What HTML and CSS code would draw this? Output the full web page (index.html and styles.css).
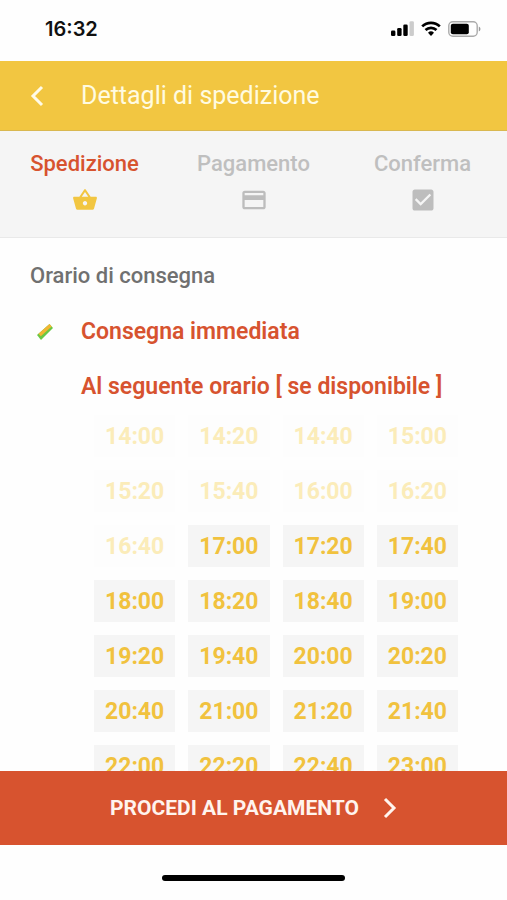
FILE: index.html
```html
<!DOCTYPE html>
<html lang="it">
<head>
<meta charset="utf-8">
<meta name="viewport" content="width=device-width, initial-scale=1">
<title>Dettagli di spedizione</title>
<link rel="stylesheet" href="styles.css">
</head>
<body>
<div class="status">
  <span class="clock">16:32</span>
  <div class="indicators">
    <svg width="23" height="15" viewBox="0 0 23 15" aria-hidden="true">
      <rect x="0" y="9.500" width="4.400" height="5.500" rx="1.300"/>
      <rect x="6.200" y="7" width="4.400" height="8" rx="1.300"/>
      <rect x="12.300" y="3.500" width="4.400" height="11.500" rx="1.300"/>
      <rect x="18.500" y="0.300" width="4.400" height="14.700" rx="1.300" fill="#ccc"/>
    </svg>
    <svg width="20" height="15" viewBox="0 0 20 15" fill="none" stroke="#000" stroke-width="2.700" aria-hidden="true">
      <path d="M1.200 5.400a12.700 12.700 0 0 1 17.600 0"/>
      <path d="M4.500 9a8 8 0 0 1 11 0"/>
      <path d="M10 15l-3-3.200a4.300 4.300 0 0 1 6 0z" fill="#000" stroke="none"/>
    </svg>
    <svg width="33" height="16" viewBox="0 0 33 16" aria-hidden="true">
      <rect x=".8" y=".8" width="28.400" height="14.400" rx="4" fill="none" stroke="#aaa" stroke-width="1.400"/>
      <rect x="2.800" y="2.800" width="18" height="10.400" rx="2"/>
      <path d="M30.800 5.500q1.700.8 1.700 2.500t-1.700 2.500z" fill="#999"/>
    </svg>
  </div>
</div>
<header class="appbar">
  <button class="back" type="button" aria-label="Indietro">
    <svg width="14" height="22" viewBox="0 0 14 22" fill="none" stroke="#fffbe8" stroke-width="3" aria-hidden="true"><path d="M12 2L3 11l9 9"/></svg>
  </button>
  <h1>Dettagli di spedizione</h1>
</header>
<nav class="steps" aria-label="Fasi dell'ordine">
  <a class="step current" href="#spedizione" aria-current="step">Spedizione
    <svg width="26" height="26" viewBox="0 0 24 24" aria-hidden="true"><path d="M17.210 9l-4.380-6.560a.99.99 0 0 0-1.660.01L6.790 9H2c-.55 0-1 .45-1 1 0 .09.010.18.040.27l2.540 9.270c.230.840 1 1.460 1.920 1.460h13c.920 0 1.690-.62 1.930-1.460l2.540-9.270L23 10c0-.55-.45-1-1-1h-4.790zM9 9l3-4.400L15 9H9zm3 8c-1.100 0-2-.9-2-2s.9-2 2-2 2 .9 2 2-.9 2-2 2z"/></svg>
  </a>
  <a class="step" href="#pagamento">Pagamento
    <svg width="32" height="28" viewBox="-1 0 26 24" aria-hidden="true"><path d="M20 4H4c-1.110 0-1.990.89-1.990 2L2 18c0 1.110.89 2 2 2h16c1.110 0 2-.89 2-2V6c0-1.110-.89-2-2-2zm0 14H4v-6h16v6zm0-10H4V6h16v2z"/></svg>
  </a>
  <a class="step" href="#conferma">Conferma
    <svg width="32" height="28" viewBox="-1 0 26 24" aria-hidden="true"><path d="M19 3H5c-1.110 0-2 .9-2 2v14c0 1.100.89 2 2 2h14c1.110 0 2-.9 2-2V5c0-1.100-.89-2-2-2zm-9 14l-5-5 1.410-1.410L10 14.170l7.590-7.590L19 8l-9 9z"/></svg>
  </a>
</nav>
<main class="content">
  <h2>Orario di consegna</h2>
  <label class="choice">
    <input type="radio" name="orario" checked>
    <svg class="mark" width="18" height="18" viewBox="0 0 18 18" aria-hidden="true"><path d="M1 12L13.500 1 17 5 5 17z" fill="#69c844"/><path d="M2.500 10.700L13.500 1l2.200 2.500L4.800 13.300z" fill="#f2b632"/></svg>
    <span>Consegna immediata</span>
  </label>
  <label class="choice">
    <input type="radio" name="orario">
    <svg class="mark" width="18" height="18" viewBox="0 0 18 18" aria-hidden="true"><path d="M1 12L13.500 1 17 5 5 17z" fill="#69c844"/><path d="M2.500 10.700L13.500 1l2.200 2.500L4.800 13.300z" fill="#f2b632"/></svg>
    <span>Al seguente orario [ se disponibile ]</span>
  </label>
  <div class="slots">
    <button type="button" disabled>14:00</button>
    <button type="button" disabled>14:20</button>
    <button type="button" disabled>14:40</button>
    <button type="button" disabled>15:00</button>
    <button type="button" disabled>15:20</button>
    <button type="button" disabled>15:40</button>
    <button type="button" disabled>16:00</button>
    <button type="button" disabled>16:20</button>
    <button type="button" disabled>16:40</button>
    <button type="button">17:00</button>
    <button type="button">17:20</button>
    <button type="button">17:40</button>
    <button type="button">18:00</button>
    <button type="button">18:20</button>
    <button type="button">18:40</button>
    <button type="button">19:00</button>
    <button type="button">19:20</button>
    <button type="button">19:40</button>
    <button type="button">20:00</button>
    <button type="button">20:20</button>
    <button type="button">20:40</button>
    <button type="button">21:00</button>
    <button type="button">21:20</button>
    <button type="button">21:40</button>
    <button type="button">22:00</button>
    <button type="button">22:20</button>
    <button type="button">22:40</button>
    <button type="button">23:00</button>
  </div>
</main>
<button class="proceed" type="button">
  <span>PROCEDI AL PAGAMENTO</span>
  <svg width="14" height="22" viewBox="0 0 14 22" fill="none" stroke="#fff4ee" stroke-width="3" aria-hidden="true"><path d="M2 2l9 9-9 9"/></svg>
</button>
<div class="home"><span class="bar"></span></div>
</body>
</html>
```
FILE: styles.css
```css
* { box-sizing: border-box; }

body {
  margin: 0;
  height: 100vh;
  display: flex;
  flex-direction: column;
  background: #fefefe;
  font-family: Roboto, "Liberation Sans", sans-serif;
}

button { border: 0; margin: 0; padding: 0; font-family: inherit; cursor: pointer; }
svg { display: block; flex: none; }

.status {
  flex: none;
  height: 61px;
  padding: 0 26px 4px 45px;
  display: flex;
  align-items: center;
  justify-content: space-between;
}
.clock { font: 600 20px/24px Inter, sans-serif; color: #111; }
.indicators { display: flex; align-items: center; gap: 7px; }

.appbar {
  flex: none;
  height: 70px;
  padding: 0 30px;
  display: flex;
  align-items: center;
  gap: 37px;
  background: #f2c641;
  border-bottom: 1px solid #d9b850;
}
.back { background: none; }
h1 { margin: 0; font-size: 25px; line-height: 32px; font-weight: 400; color: #fffbe0; }

.steps {
  flex: none;
  height: 107px;
  padding-top: 19px;
  display: grid;
  grid-template-columns: repeat(3, 1fr);
  background: #f5f5f5;
  border-bottom: 1px solid #e9e9e9;
}
.step {
  display: flex;
  flex-direction: column;
  align-items: center;
  gap: 8px;
  font-size: 22px;
  line-height: 28px;
  font-weight: 500;
  color: #bfbfbf;
  text-decoration: none;
}
.step svg { height: 28px; fill: #bdbdbd; }
.step.current { color: #d7532f; }
.step.current svg { fill: #f2c641; }

.content { flex: 1; min-height: 0; overflow: hidden; padding: 24px 30px 0; }
h2 { margin: 0 0 28px; font-size: 22px; line-height: 28px; font-weight: 500; color: #707070; }

.choice {
  display: flex;
  align-items: center;
  gap: 27px;
  margin-bottom: 27px;
  padding-left: 6px;
  font-size: 23px;
  line-height: 28px;
  font-weight: 600;
  color: #d7532f;
}
.choice input { position: absolute; opacity: 0; }
.mark { visibility: hidden; }
.choice input:checked + .mark { visibility: visible; }

.slots {
  display: grid;
  grid-template-columns: repeat(4, 1fr);
  gap: 13px;
  margin: -13px 19px 0 64px;
}
.slots button {
  height: 42px;
  background: #f5f5f5;
  color: #f1c23e;
  font-size: 23px;
  font-weight: 700;
}
.slots button:disabled { background: #fdfdfd; color: #fbecb9; cursor: default; }

.proceed {
  flex: none;
  height: 74px;
  display: flex;
  align-items: center;
  justify-content: center;
  gap: 24px;
  background: #d7532f;
  color: #fff4ee;
  font-size: 21px;
  font-weight: 700;
}

.home { flex: none; height: 55px; padding-top: 30px; }
.bar { display: block; width: 36%; height: 6px; margin: 0 auto; border-radius: 3px; background: #000; }
```
